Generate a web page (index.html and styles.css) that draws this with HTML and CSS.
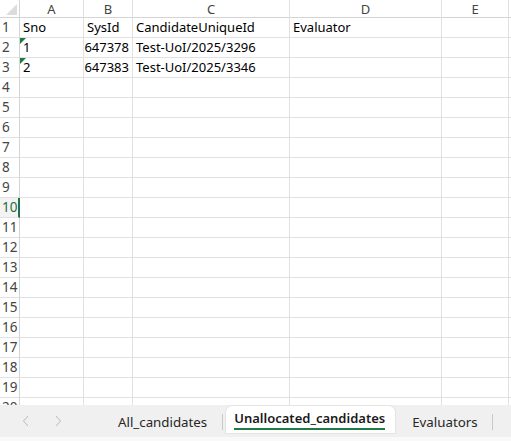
FILE: index.html
```html
<!DOCTYPE html>
<html>
<head>
<meta charset="utf-8">
<link rel="stylesheet" href="styles.css">
</head>
<body>
<div class="sheet">
  <table class="grid">
    <colgroup>
      <col class="c-rh"><col class="c-a"><col class="c-b"><col class="c-c"><col class="c-d"><col class="c-e"><col class="c-f">
    </colgroup>
    <thead>
      <tr class="colhead">
        <th class="corner"><span class="tri"></span></th>
        <th>A</th><th>B</th><th>C</th><th>D</th><th>E</th><th></th>
      </tr>
    </thead>
    <tbody id="rows">
      <tr><th class="rh">1</th><td>Sno</td><td>SysId</td><td>CandidateUniqueId</td><td>Evaluator</td><td></td><td></td></tr>
      <tr><th class="rh">2</th><td class="txtnum"><span class="flag"></span>1</td><td class="num">647378</td><td>Test-UoI/2025/3296</td><td></td><td></td><td></td></tr>
      <tr><th class="rh">3</th><td class="txtnum"><span class="flag"></span>2</td><td class="num">647383</td><td>Test-UoI/2025/3346</td><td></td><td></td><td></td></tr>
      <tr><th class="rh">4</th><td></td><td></td><td></td><td></td><td></td><td></td></tr>
      <tr><th class="rh">5</th><td></td><td></td><td></td><td></td><td></td><td></td></tr>
      <tr><th class="rh">6</th><td></td><td></td><td></td><td></td><td></td><td></td></tr>
      <tr><th class="rh">7</th><td></td><td></td><td></td><td></td><td></td><td></td></tr>
      <tr><th class="rh">8</th><td></td><td></td><td></td><td></td><td></td><td></td></tr>
      <tr><th class="rh">9</th><td></td><td></td><td></td><td></td><td></td><td></td></tr>
      <tr><th class="rh sel">10</th><td></td><td></td><td></td><td></td><td></td><td></td></tr>
      <tr><th class="rh">11</th><td></td><td></td><td></td><td></td><td></td><td></td></tr>
      <tr><th class="rh">12</th><td></td><td></td><td></td><td></td><td></td><td></td></tr>
      <tr><th class="rh">13</th><td></td><td></td><td></td><td></td><td></td><td></td></tr>
      <tr><th class="rh">14</th><td></td><td></td><td></td><td></td><td></td><td></td></tr>
      <tr><th class="rh">15</th><td></td><td></td><td></td><td></td><td></td><td></td></tr>
      <tr><th class="rh">16</th><td></td><td></td><td></td><td></td><td></td><td></td></tr>
      <tr><th class="rh">17</th><td></td><td></td><td></td><td></td><td></td><td></td></tr>
      <tr><th class="rh">18</th><td></td><td></td><td></td><td></td><td></td><td></td></tr>
      <tr><th class="rh">19</th><td></td><td></td><td></td><td></td><td></td><td></td></tr>
      <tr><th class="rh">20</th><td></td><td></td><td></td><td></td><td></td><td></td></tr>
    </tbody>
  </table>
</div>
<div class="tabbar">
  <div class="nav">
    <svg width="10" height="12" viewBox="0 0 10 12"><path d="M7 1 L2.5 6 L7 11" fill="none" stroke="#b9b9b9" stroke-width="1"/></svg>
    <svg width="10" height="12" viewBox="0 0 10 12"><path d="M3 1 L7.5 6 L3 11" fill="none" stroke="#b9b9b9" stroke-width="1"/></svg>
  </div>
  <div class="tabs">
    <div class="tab first">All_candidates</div>
    <div class="sep"></div>
    <div class="tab active"><span class="lbl">Unallocated_candidates</span></div>
    <div class="tab last">Evaluators</div>
    <div class="sep"></div>
  </div>
</div>
<div class="footer"></div>
</body>
</html>
```
FILE: styles.css
```css
html, body {
  margin: 0;
  padding: 0;
  background: #ffffff;
  width: 511px;
  height: 441px;
  overflow: hidden;
  font-family: "Noto Sans", "Open Sans", sans-serif;
}
.sheet {
  height: 405px;
  overflow: hidden;
}
.grid {
  border-collapse: separate;
  border-spacing: 0;
  table-layout: fixed;
  width: 560px;
}
.c-rh { width: 20px; }
.c-a { width: 64px; }
.c-b { width: 49px; }
.c-c { width: 157px; }
.c-d { width: 152px; }
.c-e { width: 67px; }
.c-f { width: 51px; }
.grid th, .grid td {
  box-sizing: border-box;
  padding: 0;
  border-right: 1px solid #e1e1e1;
  border-bottom: 1px solid #e1e1e1;
  white-space: nowrap;
  overflow: hidden;
}
.colhead th {
  height: 18px;
  font-weight: normal;
  font-size: 13px;
  color: #444;
  text-align: center;
  line-height: 16px;
  border-bottom: 1px solid #d4d4d4;
  border-right: 1px solid #e1e1e1;
  background: #fff;
}
.colhead th.corner {
  position: relative;
  border-right: 1px solid #d4d4d4;
}
.tri {
  position: absolute;
  right: 2px;
  bottom: 2px;
  width: 0;
  height: 0;
  border-left: 11px solid transparent;
  border-bottom: 11px solid #dcdcdc;
}
.grid tbody tr { height: 20px; }
.grid tbody td {
  height: 20px;
  font-size: 13px;
  color: #000;
  padding: 0 2px 0 3px;
  line-height: 19px;
  vertical-align: bottom;
}
.grid th.rh {
  font-weight: normal;
  font-size: 13.5px;
  color: #444;
  text-align: left;
  padding-left: 2px;
  border-right: 1px solid #d4d4d4;
  line-height: 19px;
}
.grid th.rh.sel {
  color: #1e6e48;
  border-right: 2px solid #217346;
  background: #f3f3f3;
}
.grid td.num { text-align: right; padding-right: 3px; padding-left: 0; }
.grid td.txtnum { position: relative; }
.flag {
  position: absolute;
  left: 0;
  top: 0;
  width: 0;
  height: 0;
  border-top: 6px solid #1f7a3e;
  border-right: 6px solid transparent;
}
.tabbar {
  height: 32px;
  background: #f0f0f0;
  display: flex;
  align-items: stretch;
}
.nav {
  width: 90px;
  display: flex;
  align-items: center;
  gap: 22px;
  padding-left: 21px;
  box-sizing: border-box;
}
.tabs {
  display: flex;
  align-items: stretch;
}
.tab {
  font-size: 13.3px;
  color: #262626;
  display: flex;
  align-items: center;
  padding-top: 2px;
}
.tab.first {
  padding-left: 28px;
  padding-right: 15px;
}
.tab.last {
  padding-left: 17px;
  padding-right: 14px;
}
.sep {
  width: 1px;
  background: #c8c8c8;
  margin: 9px 0 7px;
}
.tab.active {
  background: #fff;
  border-radius: 6px 6px 0 0;
  padding: 0 10px 0 8px;
  margin-left: 3px;
  margin-bottom: 4px;
  margin-top: 1px;
  box-shadow: 0 0 0 1px #e4e4e4;
  font-size: 13px;
  font-weight: 600;
  color: #1a1a1a;
  align-items: flex-start;
}
.tab.active .lbl {
  border-bottom: 2px solid #1f7a44;
  line-height: 20px;
  margin-top: 2px;
}
.footer {
  height: 4px;
  background: #f9f9f9;
}
```
